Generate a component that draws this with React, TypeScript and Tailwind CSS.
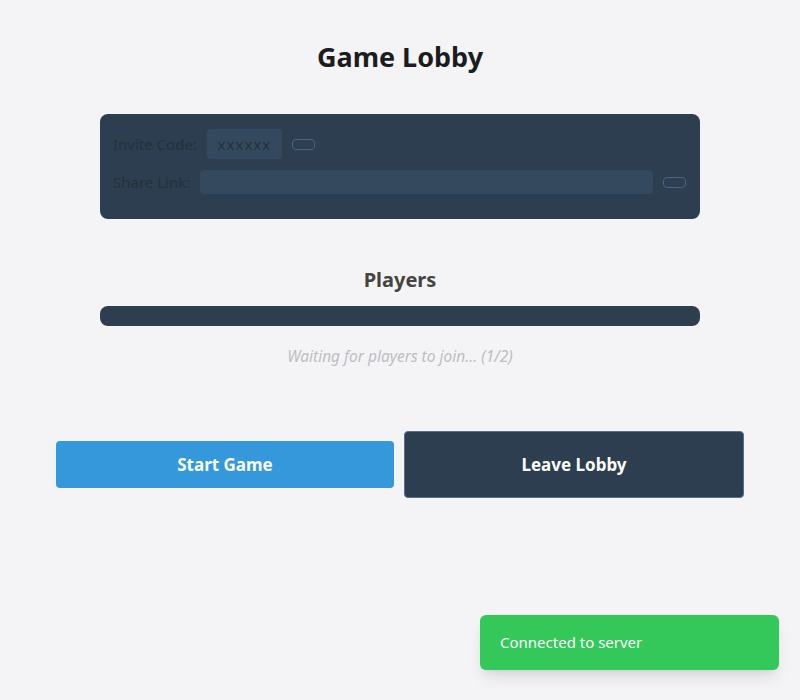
import React from "react";

export default function App() {
  return (
    <div className="min-h-[700px] w-full bg-[#f4f4f7] relative" style={{ fontFamily: '"Noto Sans", "Open Sans", sans-serif' }}>
      <div className="pt-[37px] flex flex-col items-center">
        <h1 className="text-[27px] leading-[40px] font-bold text-[#1c1c1e]">Game Lobby</h1>
        <div className="mt-[37px] w-[600px] bg-[#2c3e50] rounded-lg pl-[13px] pr-[14px] pt-[15px] pb-[25px] flex flex-col gap-[11px]">
          <div className="flex items-center h-[30px]">
            <span className="text-[15px] text-[#25303b]">Invite Code:</span>
            <div className="ml-[10px] h-[30px] w-[75px] rounded bg-[#34495e] flex items-center justify-center text-[15px] tracking-[1px] text-[#25303b]">xxxxxx</div>
            <button className="ml-[10px] w-[23px] h-[11px] rounded-[4px] border border-[#4b6480]"></button>
          </div>
          <div className="flex items-center h-[24px]">
            <span className="text-[15px] text-[#25303b]">Share Link:</span>
            <div className="ml-[10px] h-[24px] flex-1 rounded bg-[#34495e]"></div>
            <button className="ml-[10px] w-[23px] h-[11px] rounded-[4px] border border-[#4b6480]"></button>
          </div>
        </div>
        <h2 className="mt-[46px] text-[20px] leading-[30px] font-bold text-[#444]">Players</h2>
        <div className="mt-[11px] w-[600px] h-[20px] rounded-lg bg-[#2c3e50]"></div>
        <p className="mt-[19px] text-[15.5px] italic text-[#bdbdc2]">Waiting for players to join... (1/2)</p>
        <div className="mt-[63px] w-[688px] flex items-center gap-[10px]">
          <button className="flex-1 h-[47px] rounded bg-[#3498db] text-white font-bold text-[17px]">Start Game</button>
          <button className="flex-1 h-[67px] rounded bg-[#2c3e50] border border-[#5a7089] text-white font-bold text-[17px]">Leave Lobby</button>
        </div>
      </div>
      <div className="absolute right-[21px] top-[615px] w-[299px] h-[55px] rounded-md bg-[#34c85a] shadow-lg flex items-center px-[20px] text-white text-[15px]">
        Connected to server
      </div>
    </div>
  );
}
